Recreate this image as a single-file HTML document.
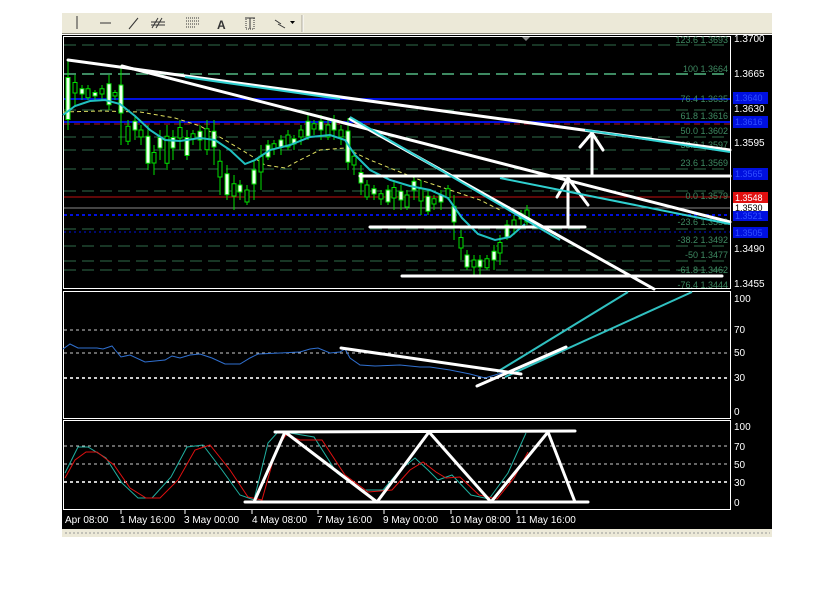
<!DOCTYPE html>
<html><head><meta charset="utf-8"><style>
html,body{margin:0;padding:0;background:#fff;width:837px;height:606px;overflow:hidden}
svg{display:block;font-family:"Liberation Sans",sans-serif}
</style></head><body>
<svg width="837" height="606" viewBox="0 0 837 606">
<rect width="837" height="606" fill="#fff"/>
<!-- toolbar -->
<rect x="62" y="13" width="710" height="21" fill="#ece9d8"/>
<line x1="62" y1="33.5" x2="772" y2="33.5" stroke="#8a8778"/>
<line x1="302" y1="15" x2="302" y2="32" stroke="#aca899"/>
<line x1="303" y1="15" x2="303" y2="32" stroke="#fff"/>
<g stroke="#333" stroke-width="1" fill="none">
<line x1="77" y1="16" x2="77" y2="29"/>
<line x1="100" y1="23" x2="111" y2="23"/>
<line x1="129" y1="29" x2="138" y2="18"/>
<path d="M152 28 L158 18 M156 28 L162 18 M151 22 H165 M151 25 H165"/>
<path d="M186 18 H199 M186 21 H199 M186 24 H199 M186 27 H196" stroke-dasharray="1 1"/>
<rect x="246" y="18" width="8" height="11" stroke-dasharray="1 1"/>
<path d="M245 18 H255 M250 18 V29"/>
<path d="M275 20 L281 24 M278 24 L285 28"/>
</g>
<text x="217" y="29" font-size="12" font-weight="bold" fill="#333">A</text>
<path d="M290 21 L295 21 L292.5 24 Z" fill="#000"/>
<!-- chart bg -->
<rect x="62" y="35" width="710" height="494" fill="#000"/>
<!-- panel frames -->
<g stroke="#fff" fill="none" stroke-width="1">
<rect x="63.5" y="36.5" width="667" height="252"/>
<rect x="63.5" y="291.5" width="667" height="127"/>
<rect x="63.5" y="420.5" width="667" height="89"/>
</g>
<path d="M522 37 L530 37 L526 41 Z" fill="#888"/>
<!-- fib dashed lines -->
<g stroke="#2f6b4a" stroke-width="1" stroke-dasharray="12 6">
<line x1="64" y1="45" x2="730" y2="45"/>
<line x1="64" y1="74" x2="730" y2="74" stroke-width="2" stroke="#3e8a62"/>
<line x1="64" y1="110" x2="730" y2="110"/>
<line x1="64" y1="137" x2="730" y2="137"/>
<line x1="64" y1="150" x2="730" y2="150"/>
<line x1="64" y1="169" x2="730" y2="169"/>
<line x1="64" y1="191" x2="730" y2="191"/>
<line x1="64" y1="229" x2="730" y2="229"/>
<line x1="64" y1="246" x2="730" y2="246"/>
<line x1="64" y1="261" x2="730" y2="261"/>
<line x1="64" y1="270" x2="730" y2="270"/>
</g>
<line x1="64" y1="99" x2="730" y2="99" stroke="#0010e0" stroke-width="2"/>
<line x1="64" y1="122" x2="730" y2="122" stroke="#0010e0" stroke-width="2"/>
<line x1="64" y1="124" x2="730" y2="124" stroke="#b01030" stroke-width="1" stroke-dasharray="6 4"/>
<line x1="64" y1="197" x2="730" y2="197" stroke="#c01010" stroke-width="1"/>
<line x1="64" y1="208" x2="730" y2="208" stroke="#888" stroke-width="1"/>
<line x1="64" y1="215" x2="730" y2="215" stroke="#0010e0" stroke-width="2" stroke-dasharray="3 3"/>
<line x1="64" y1="232" x2="730" y2="232" stroke="#0010e0" stroke-width="1" stroke-dasharray="2 3"/>
<!-- fib labels -->
<g fill="#3e8a62" font-size="9" text-anchor="end">
<text x="728" y="43">123.6  1.3693</text>
<text x="728" y="72">100   1.3664</text>
<text x="728" y="102">76.4  1.3635</text>
<text x="728" y="119">61.8  1.3616</text>
<text x="728" y="134">50.0  1.3602</text>
<text x="728" y="148">38.2  1.3597</text>
<text x="728" y="166">23.6  1.3569</text>
<text x="728" y="199">0.0  1.3579</text>
<text x="728" y="225">-23.6  1.3550</text>
<text x="728" y="243">-38.2  1.3492</text>
<text x="728" y="258">-50  1.3477</text>
<text x="728" y="273">-61.8  1.3462</text>
<text x="728" y="288">-76.4  1.3444</text>
</g>
<!-- yellow dashed MA -->
<polyline fill="none" stroke="#e0e060" stroke-width="1" stroke-dasharray="4 3" points="63,112 100,111 140,112 175,118 200,126 225,140 250,155 265,165 285,168 300,160 320,150 345,148 370,160 395,170 420,180 450,190 480,200 500,210"/>
<!-- candles -->
<g id="c" stroke="#00e000" stroke-width="1"></g>
<!-- MA cyan -->
<polyline fill="none" stroke="#20c0c0" stroke-width="2" points="63,115 75,106 90,101 105,100 120,104 135,116 150,130 165,140 180,141 200,138 215,140 230,150 245,164 255,160 270,150 290,145 310,137 330,135 345,140 355,155 370,170 390,180 410,186 430,190 448,198 462,218 478,234 495,240 510,237 525,224"/>
<!-- white trend lines -->
<g stroke="#fff" stroke-width="3" fill="none" stroke-linecap="round">
<line x1="68" y1="60" x2="730" y2="150"/>
<line x1="122" y1="66" x2="730" y2="222"/>
<line x1="350" y1="119" x2="654" y2="289"/>
<line x1="360" y1="176" x2="730" y2="176"/>
<line x1="370" y1="227" x2="585" y2="227"/>
<line x1="402" y1="276" x2="722" y2="276"/>
<line x1="592" y1="176" x2="592" y2="134"/>
<path d="M580 147 L592 133 L603 150"/>
<line x1="568" y1="227" x2="568" y2="180"/>
<path d="M557 197 L568 178 L588 205"/>
</g>
<g stroke="#30d0d0" stroke-width="2" fill="none">
<line x1="185" y1="77" x2="340" y2="99"/>
<line x1="585" y1="130" x2="730" y2="152"/>
<line x1="350" y1="117" x2="560" y2="240"/>
<line x1="500" y1="178" x2="730" y2="224"/>
</g>
<!-- right axis labels -->
<g fill="#fff" font-size="10">
<text x="734" y="42">1.3700</text>
<text x="734" y="77">1.3665</text>
<text x="734" y="112">1.3630</text>
<text x="734" y="146">1.3595</text>
<text x="734" y="252">1.3490</text>
<text x="734" y="287">1.3455</text>
</g>
<g font-size="9">
<rect x="733" y="92" width="35" height="12" fill="#0010e0"/><text x="735" y="101" fill="#3050ff">1.3640</text>
<rect x="733" y="116" width="35" height="12" fill="#0010e0"/><text x="735" y="125" fill="#3050ff">1.3616</text>
<rect x="733" y="168" width="35" height="12" fill="#0010e0"/><text x="735" y="177" fill="#3050ff">1.3565</text>
<rect x="733" y="192" width="35" height="11" fill="#e01010"/><text x="735" y="201" fill="#fff">1.3548</text>
<rect x="733" y="203" width="35" height="8" fill="#fff"/><text x="735" y="211" fill="#000">1.3530</text>
<rect x="733" y="211" width="35" height="10" fill="#0010e0"/><text x="735" y="219" fill="#3050ff">1.3521</text>
<rect x="733" y="227" width="35" height="11" fill="#0010e0"/><text x="735" y="236" fill="#3050ff">1.3505</text>
</g>
<!-- RSI panel -->
<g stroke="#ccc" stroke-width="1" stroke-dasharray="3 3">
<line x1="64" y1="330" x2="730" y2="330"/>
<line x1="64" y1="353" x2="730" y2="353"/>
<line x1="64" y1="378" x2="730" y2="378" stroke-width="2"/>
</g>
<g fill="#fff" font-size="10">
<text x="734" y="302">100</text><text x="734" y="333">70</text><text x="734" y="356">50</text><text x="734" y="381">30</text><text x="734" y="415">0</text>
</g>
<polyline fill="none" stroke="#3070d0" stroke-width="1" points="63,349 70,344 78,348 97,348 103,349 112,346 116,351 121,357 130,355 145,362 165,360 172,356 180,358 190,355 200,354 212,358 225,364 240,364 250,358 258,354 280,353 300,352 310,349 318,348 330,353 340,352 345,349 350,358 360,365 375,366 400,365 420,367 430,367 450,370 470,374 485,378 495,375 505,372"/>
<g stroke="#30c0c0" stroke-width="2" fill="none">
<line x1="497" y1="372" x2="628" y2="292"/>
<line x1="505" y1="377" x2="692" y2="292"/>
</g>
<g stroke="#fff" stroke-width="3" stroke-linecap="round">
<line x1="341" y1="348" x2="521" y2="374"/>
<line x1="477" y1="386" x2="566" y2="347"/>
</g>
<!-- Stoch panel -->
<g stroke="#ccc" stroke-width="1" stroke-dasharray="3 3">
<line x1="64" y1="446" x2="730" y2="446"/>
<line x1="64" y1="464" x2="730" y2="464"/>
<line x1="64" y1="482" x2="730" y2="482" stroke-width="2"/>
</g>
<g fill="#fff" font-size="10">
<text x="734" y="430">100</text><text x="734" y="450">70</text><text x="734" y="468">50</text><text x="734" y="486">30</text><text x="734" y="506">0</text>
</g>
<polyline fill="none" stroke="#20b0a0" stroke-width="1" points="65,473 78,447 88,447 106,458 122,483 138,498 152,498 171,477 187,447 203,445 222,470 240,495 254,500 268,443 277,433 290,433 314,437 337,473 360,490 383,490 400,470 415,458 428,470 438,480 452,475 471,495 489,499 508,473 526,433"/>
<polyline fill="none" stroke="#e01010" stroke-width="1" points="65,478 75,460 86,452 97,452 114,465 130,488 146,498 160,498 178,480 195,450 210,445 230,470 248,497 262,500 276,450 286,435 300,440 322,440 345,475 368,492 392,490 410,470 423,462 436,472 446,478 460,477 479,495 497,499 514,478 528,452"/>
<g stroke="#fff" stroke-width="3" fill="none" stroke-linecap="round" stroke-linejoin="round">
<line x1="275" y1="432" x2="575" y2="431"/>
<line x1="245" y1="502" x2="588" y2="502"/>
<polyline points="254,502 285,432 377,502 429,432 491,502 548,432 575,502"/>
</g>
<!-- time axis -->
<g fill="#fff" font-size="10">
<text x="65" y="523">Apr 08:00</text>
<text x="120" y="523">1 May 16:00</text>
<text x="184" y="523">3 May 00:00</text>
<text x="252" y="523">4 May 08:00</text>
<text x="317" y="523">7 May 16:00</text>
<text x="383" y="523">9 May 00:00</text>
<text x="450" y="523">10 May 08:00</text>
<text x="516" y="523">11 May 16:00</text>
</g>
<g stroke="#fff"><line x1="121" y1="510" x2="121" y2="514"/><line x1="185" y1="510" x2="185" y2="514"/><line x1="252" y1="510" x2="252" y2="514"/><line x1="318" y1="510" x2="318" y2="514"/><line x1="384" y1="510" x2="384" y2="514"/><line x1="451" y1="510" x2="451" y2="514"/><line x1="517" y1="510" x2="517" y2="514"/></g>
<!-- bottom tabs -->
<rect x="62" y="529" width="710" height="8" fill="#ece9d8"/>
<g stroke="#999" stroke-dasharray="2 2"><line x1="65" y1="533" x2="770" y2="533"/></g>
</svg>
<script>
var d=[[68,60,130],[75,75,105],[82,85,100],[88,85,100],[95,90,100],[102,85,100],[109,75,110],[115,90,100],[121,65,145],[128,120,145],[135,115,140],[141,125,145],[148,125,170],[154,145,175],[160,130,160],[167,125,170],[173,130,160],[180,120,150],[187,130,160],[193,130,145],[200,125,150],[207,120,155],[214,120,165],[220,150,195],[227,165,200],[234,175,210],[240,180,200],[247,185,205],[254,160,200],[261,145,190],[268,140,160],[274,140,155],[281,135,155],[288,130,150],[294,135,150],[301,125,145],[308,115,140],[314,120,135],[321,115,140],[328,120,140],[334,115,140],[341,125,145],[348,118,170],[354,150,175],[361,165,195],[367,180,200],[374,185,200],[381,190,205],[388,185,205],[394,180,210],[401,185,210],[407,190,210],[414,175,200],[421,180,215],[428,190,215],[434,195,210],[441,190,210],[448,185,200],[454,195,240],[461,230,260],[467,250,270],[474,255,275],[480,255,275],[487,255,270],[494,245,270],[500,235,265],[507,220,240],[514,215,235],[521,210,225],[527,205,225]];
var g=document.getElementById('c'),s='';
d.forEach(function(c,i){var h=c[2]-c[1],t=c[1]+h*0.25,b=c[1]+h*(i%3==0?0.85:0.6);
s+='<line x1="'+c[0]+'" y1="'+c[1]+'" x2="'+c[0]+'" y2="'+c[2]+'"/>';
s+='<rect x="'+(c[0]-2)+'" y="'+t+'" width="4" height="'+Math.max(2,b-t)+'" fill="'+(i%2?'#000':'#f0fff0')+'"/>';});
g.innerHTML=s;
</script>
</body></html>
